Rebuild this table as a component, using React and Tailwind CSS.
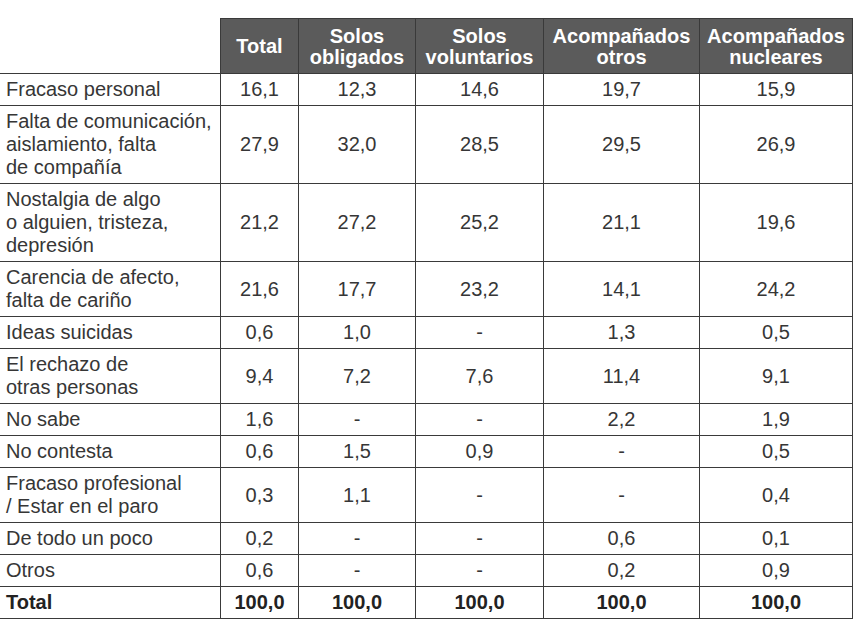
import React from "react";

const head = [
  ["Total"],
  ["Solos", "obligados"],
  ["Solos", "voluntarios"],
  ["Acompañados", "otros"],
  ["Acompañados", "nucleares"],
];

const rows = [
  [["Fracaso personal"], "16,1", "12,3", "14,6", "19,7", "15,9"],
  [["Falta de comunicación,", "aislamiento, falta", "de compañía"], "27,9", "32,0", "28,5", "29,5", "26,9"],
  [["Nostalgia de algo", "o alguien, tristeza,", "depresión"], "21,2", "27,2", "25,2", "21,1", "19,6"],
  [["Carencia de afecto,", "falta de cariño"], "21,6", "17,7", "23,2", "14,1", "24,2"],
  [["Ideas suicidas"], "0,6", "1,0", "-", "1,3", "0,5"],
  [["El rechazo de", "otras personas"], "9,4", "7,2", "7,6", "11,4", "9,1"],
  [["No sabe"], "1,6", "-", "-", "2,2", "1,9"],
  [["No contesta"], "0,6", "1,5", "0,9", "-", "0,5"],
  [["Fracaso profesional", "/ Estar en el paro"], "0,3", "1,1", "-", "-", "0,4"],
  [["De todo un poco"], "0,2", "-", "-", "0,6", "0,1"],
  [["Otros"], "0,6", "-", "-", "0,2", "0,9"],
];

export default function App() {
  return (
    <div
      className="w-[854px] h-[640px] bg-white pt-[18px] text-[#363636]"
      style={{ fontFamily: '"Liberation Sans", Arial, sans-serif' }}
    >
      <div className="grid grid-cols-[220px_78px_117px_128px_156px_154px] text-[20px] leading-[23px]">
        {/* header */}
        <div className="border-b border-[#3a3a3a]" />
        {head.map((h, i) => (
          <div
            key={i}
            className={
              "bg-[#5b5b5b] border-t border-l border-b border-[#3a3a3a] text-white font-bold flex flex-col items-center justify-center text-center leading-[21px] h-[56px] pt-[1px] " +
              (i === 4 ? "border-r" : "")
            }
          >
            {h.map((t, j) => (
              <span key={j}>{t}</span>
            ))}
          </div>
        ))}
        {rows.map((r, ri) => (
          <React.Fragment key={ri}>
            <div className="border-b border-[#3a3a3a] pl-[6px] py-[4px] flex flex-col justify-center">
              {r[0].map((t, j) => (
                <span key={j}>{t}</span>
              ))}
            </div>
            {r.slice(1).map((v, ci) => (
              <div
                key={ci}
                className={
                  "border-b border-l border-[#3a3a3a] flex items-center justify-center py-[4px] " +
                  (ci === 4 ? "border-r" : "")
                }
              >
                {v}
              </div>
            ))}
          </React.Fragment>
        ))}
        {/* total */}
        <div className="border-b border-[#3a3a3a] pl-[6px] py-[4px] font-bold text-[#222]">Total</div>
        {["100,0", "100,0", "100,0", "100,0", "100,0"].map((v, ci) => (
          <div
            key={ci}
            className={
              "border-b border-l border-[#3a3a3a] flex items-center justify-center py-[4px] font-bold text-[#222] " +
              (ci === 4 ? "border-r" : "")
            }
          >
            {v}
          </div>
        ))}
      </div>
    </div>
  );
}
